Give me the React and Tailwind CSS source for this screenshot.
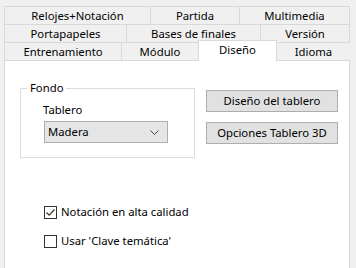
import React from "react";

const tabBase =
  "flex items-center justify-center border-l border-t border-[#d9d9d9] bg-[#f0f0f0] text-black whitespace-nowrap";

function Row({ tabs }) {
  return (
    <div className="flex h-[18px]">
      {tabs.map((t, i) => (
        <div
          key={t.label}
          className={`${tabBase} ${i === tabs.length - 1 ? "border-r" : ""}`}
          style={{ width: t.w }}
        >
          {t.label}
        </div>
      ))}
    </div>
  );
}

function CheckRow({ checked, label }) {
  return (
    <div className="flex items-center h-[16px]">
      <div className="w-[13px] h-[13px] border border-[#333333] bg-white flex items-center justify-center">
        {checked && (
          <svg width="11" height="11" viewBox="0 0 11 11">
            <path d="M1.5 5.5 L4.2 8.2 L9.5 2.5" fill="none" stroke="#333333" strokeWidth="1.2" />
          </svg>
        )}
      </div>
      <span className="ml-[4px] text-black">{label}</span>
    </div>
  );
}

export default function App() {
  return (
    <div
      className="w-[356px] h-[268px] bg-[#f0f0f0] overflow-hidden pt-[6px] pl-[4px] text-[11.3px] leading-[16px]"
      style={{ fontFamily: "'Segoe UI', 'Noto Sans', 'Open Sans', sans-serif" }}
    >
      <div className="w-[346px]">
        <Row
          tabs={[
            { label: "Relojes+Notación", w: 146 },
            { label: "Partida", w: 89 },
            { label: "Multimedia", w: 111 },
          ]}
        />
        <Row
          tabs={[
            { label: "Portapapeles", w: 122 },
            { label: "Bases de finales", w: 134 },
            { label: "Versión", w: 90 },
          ]}
        />
        <div className="flex h-[18px]">
          <div className={tabBase} style={{ width: 117 }}>Entrenamiento</div>
          <div className={tabBase} style={{ width: 77 }}>Módulo</div>
          <div className="relative z-10 -mt-[2px] h-[21px] w-[79px] flex items-start justify-center pt-[1px] border-l border-t border-r border-[#d9d9d9] bg-white text-black">
            Diseño
          </div>
          <div className={`${tabBase} border-l-0`} style={{ width: 73 }}>Idioma</div>
        </div>

        <div className="h-[230px] border border-[#d9d9d9] bg-white">
          <div className="flex">
            <fieldset className="ml-[15px] mt-[19px] w-[175px] border border-[#dcdcdc] pl-[22px] pb-[14px]">
              <legend className="ml-[-16px] px-[3px] leading-[16px] text-black">Fondo</legend>
              <div className="mt-[6px] text-black">Tablero</div>
              <div className="mt-[3px] ml-[1px] w-[124px] h-[22px] border border-[#adadad] bg-[#e5e5e5] flex items-center justify-between pl-[3px] pr-[8px]">
                <span className="text-black">Madera</span>
                <svg width="9" height="5" viewBox="0 0 9 5">
                  <path d="M0.5 0.5 L4.5 4.5 L8.5 0.5" fill="none" stroke="#444444" strokeWidth="1" />
                </svg>
              </div>
            </fieldset>
            <div className="ml-[11px] mt-[29px] flex flex-col gap-[10px]">
              <div className="w-[132px] h-[22px] border border-[#adadad] bg-[#e1e1e1] flex items-center justify-center text-black">
                Diseño del tablero
              </div>
              <div className="w-[132px] h-[22px] border border-[#adadad] bg-[#e1e1e1] flex items-center justify-center text-black">
                Opciones Tablero 3D
              </div>
            </div>
          </div>
          <div className="ml-[39px] mt-[46px] flex flex-col gap-[13px]">
            <CheckRow checked label="Notación en alta calidad" />
            <CheckRow label="Usar 'Clave temática'" />
          </div>
        </div>
      </div>
    </div>
  );
}
